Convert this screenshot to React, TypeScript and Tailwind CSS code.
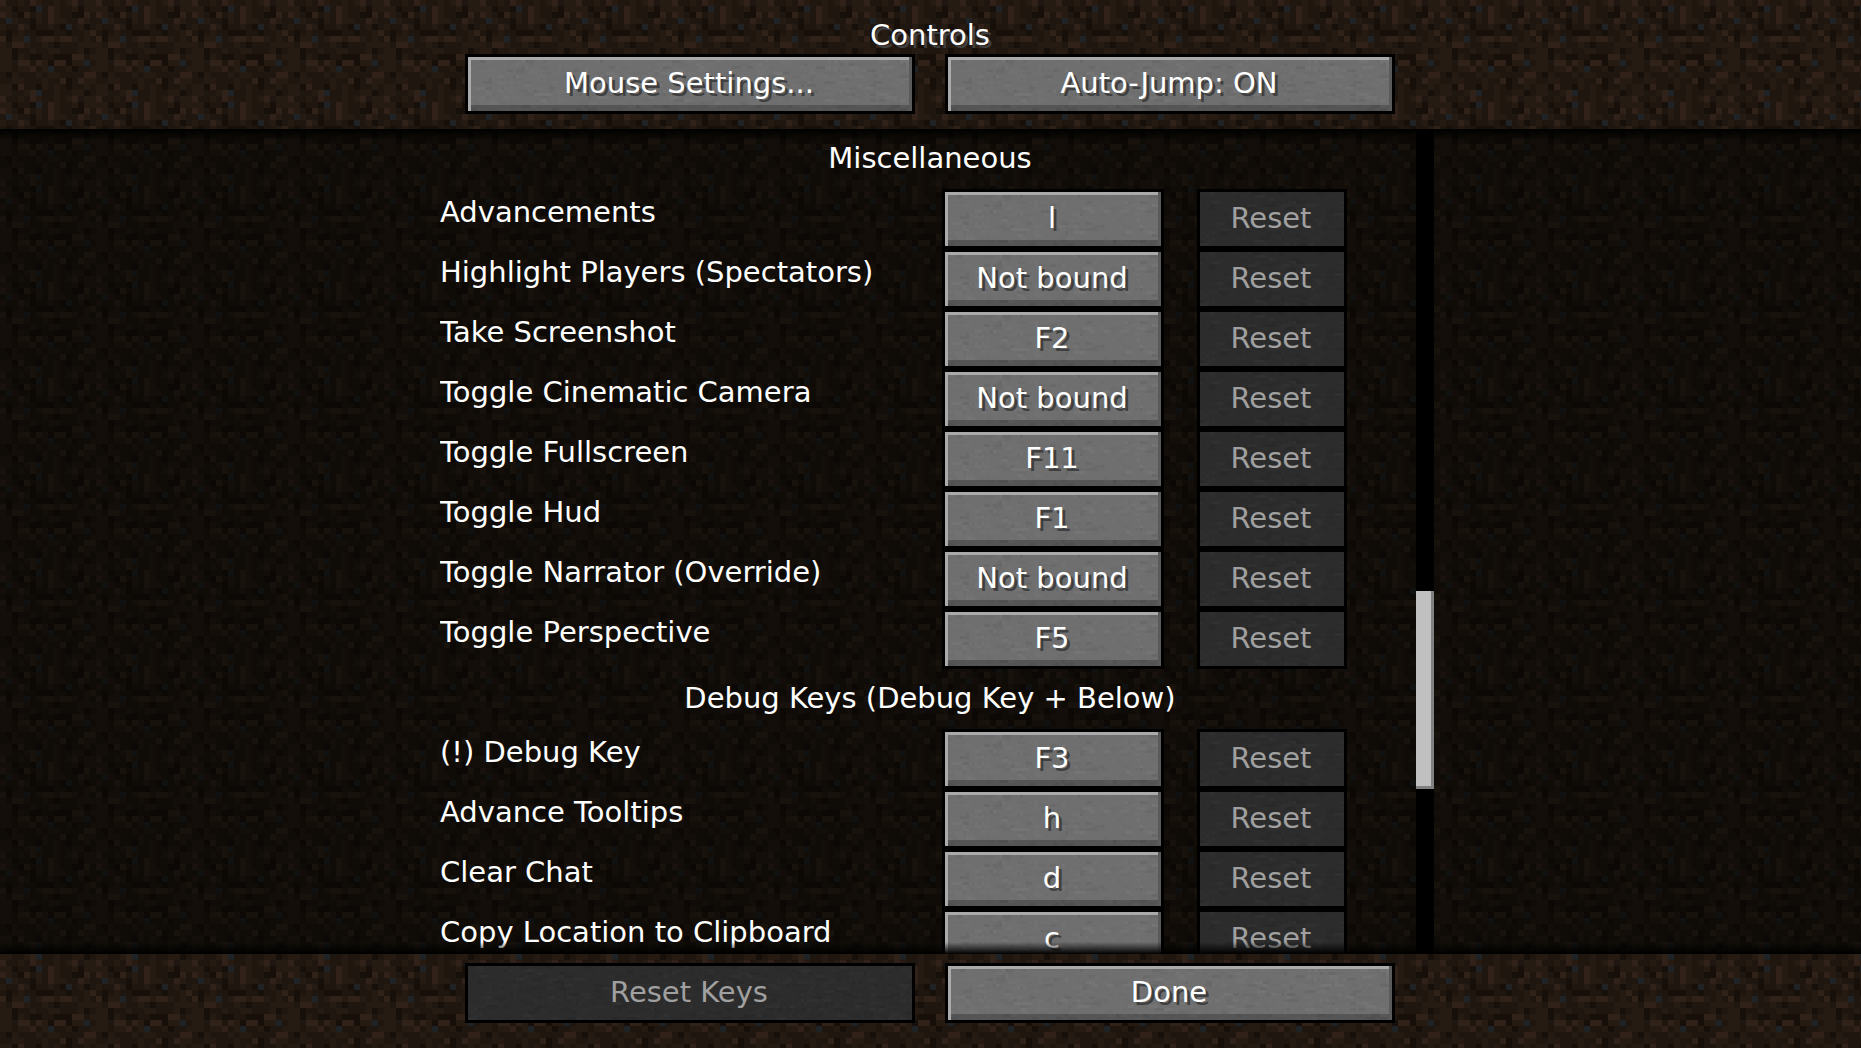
import { useState } from "react";
import clsx from "clsx";

interface Binding {
  id: string;
  label: string;
  value: string;
}

interface Category {
  title: string;
  bindings: Binding[];
}

const CATEGORIES: Category[] = [
  {
    title: "Miscellaneous",
    bindings: [
      { id: "advancements", label: "Advancements", value: "l" },
      { id: "highlight", label: "Highlight Players (Spectators)", value: "Not bound" },
      { id: "screenshot", label: "Take Screenshot", value: "F2" },
      { id: "cinematic", label: "Toggle Cinematic Camera", value: "Not bound" },
      { id: "fullscreen", label: "Toggle Fullscreen", value: "F11" },
      { id: "hud", label: "Toggle Hud", value: "F1" },
      { id: "narrator", label: "Toggle Narrator (Override)", value: "Not bound" },
      { id: "perspective", label: "Toggle Perspective", value: "F5" },
    ],
  },
  {
    title: "Debug Keys (Debug Key + Below)",
    bindings: [
      { id: "debug", label: "(!) Debug Key", value: "F3" },
      { id: "tooltips", label: "Advance Tooltips", value: "h" },
      { id: "clear-chat", label: "Clear Chat", value: "d" },
      { id: "copy-location", label: "Copy Location to Clipboard", value: "c" },
    ],
  },
];

// 16x16 dirt tile, one character per texel
const DIRT = [
  "3112132112123122",
  "220110b132112022",
  "3210312132110031",
  "1b21102132211321",
  "21132011210b1201",
  "1012110001101123",
  "3022b12332332121",
  "2133211210111222",
  "2201121122111201",
  "2202100110003312",
  "22133132033022b1",
  "22122312b1120112",
  "1021112122111133",
  "1122111211301322",
  "2203110212101121",
  "221123b112112201",
];

const DIRT_COLORS: Record<string, string> = {
  "0": "#170f0a",
  "1": "#1f160f",
  "2": "#261b12",
  "3": "#302219",
  b: "#202325",
};

function svgUrl(width: number, height: number, body: string) {
  const svg = `<svg xmlns="http://www.w3.org/2000/svg" width="${width}" height="${height}" shape-rendering="crispEdges">${body}</svg>`;
  return `url("data:image/svg+xml,${encodeURIComponent(svg)}")`;
}

function dirtTexture() {
  let body = "";
  DIRT.forEach((row, y) => {
    [...row].forEach((c, x) => {
      body += `<rect x="${x * 6}" y="${y * 6}" width="6" height="6" fill="${DIRT_COLORS[c]}"/>`;
    });
  });
  return svgUrl(96, 96, body);
}

function stoneTexture(base: string, shades: string[]) {
  let seed = 7;
  const rand = () => {
    seed = (seed * 16807) % 2147483647;
    return seed / 2147483647;
  };
  let body = `<rect width="450" height="54" fill="${base}"/>`;
  for (let i = 0; i < 750; i++) {
    const x = Math.floor(rand() * 150) * 3;
    const y = Math.floor(rand() * 18) * 3;
    const w = (1 + Math.floor(rand() * 3)) * 3;
    const fill = shades[Math.floor(rand() * shades.length)];
    body += `<rect x="${x}" y="${y}" width="${w}" height="3" fill="${fill}"/>`;
  }
  return svgUrl(450, 54, body);
}

const dirt = dirtTexture();
const stone = stoneTexture("#6f6f6f", ["#6c6c6c", "#727272", "#6d6d6d", "#717171", "#747474", "#696969", "#6e6e6e", "#707070"]);
const darkStone = stoneTexture("#2c2c2c", ["#2a2a2a", "#2e2e2e", "#2b2b2b", "#2d2d2d", "#303030", "#292929"]);

interface StoneButtonProps {
  children: React.ReactNode;
  className?: string;
  disabled?: boolean;
  label?: string;
  onClick?: () => void;
}

function StoneButton({ children, className, disabled, label, onClick }: StoneButtonProps) {
  return (
    <button
      type="button"
      disabled={disabled}
      aria-label={label}
      onClick={onClick}
      className={clsx(
        "h-[60px] shrink-0 border-[3px] border-black pr-0.5 pb-0.5 text-center",
        disabled
          ? "text-[#a0a0a0]"
          : "text-white shadow-[inset_-3px_0_0_#5a5a5a,inset_3px_3px_0_#aaaaaa,inset_0_-6px_0_rgba(0,0,0,0.23)] [text-shadow:3px_3px_0_#3f3f3f]",
        className,
      )}
      style={{ backgroundImage: disabled ? darkStone : stone }}
    >
      {children}
    </button>
  );
}

function BindingRow({ binding }: { binding: Binding }) {
  return (
    <li className="flex h-[60px] items-center pr-[73px]">
      <span className="flex-1 pb-3.5">{binding.label}</span>
      <StoneButton className="w-[222px]" label={`${binding.label}: ${binding.value}`}>
        {binding.value}
      </StoneButton>
      <StoneButton className="ml-[33px] w-[150px]" label={`Reset ${binding.label}`} disabled>
        Reset
      </StoneButton>
    </li>
  );
}

export default function App() {
  const [autoJump, setAutoJump] = useState(true);

  return (
    <div
      className="flex h-screen flex-col overflow-hidden bg-[#20160f] font-['DejaVu_Sans',sans-serif] text-[29px] leading-[34px] text-white"
      style={{ backgroundImage: dirt }}
    >
      {/* Header */}
      <header className="shrink-0 pt-[18px] pr-px pb-[15px]">
        <h1 className="text-center [text-shadow:3px_3px_0_#3f3f3f]">Controls</h1>
        <div className="mt-0.5 flex justify-center gap-[30px]">
          <StoneButton className="w-[450px]">Mouse Settings...</StoneButton>
          <StoneButton className="w-[450px]" onClick={() => setAutoJump(!autoJump)}>
            Auto-Jump: {autoJump ? "ON" : "OFF"}
          </StoneButton>
        </div>
      </header>

      {/* Key list */}
      <main
        className="relative min-h-0 flex-1 overflow-hidden bg-[position:0_-45px]"
        style={{ backgroundImage: `linear-gradient(rgba(0,2,0,0.5), rgba(0,2,0,0.5)), ${dirt}` }}
      >
        <div className="grid h-full grid-cols-[1fr_980px_1fr] pr-px">
          <div className="col-start-2 min-h-0 overflow-y-auto [scrollbar-width:none]">
            {CATEGORIES.map((category) => (
              <section key={category.title}>
                <h2 className="flex h-[60px] items-center justify-center pb-0.5">{category.title}</h2>
                <ul>
                  {category.bindings.map((binding) => (
                    <BindingRow key={binding.id} binding={binding} />
                  ))}
                </ul>
              </section>
            ))}
          </div>
          {/* Scrollbar */}
          <div className="-ml-1 w-[18px] bg-black">
            <div className="h-[56%]" />
            <div className="h-[24%] border-r-[3px] border-b-[3px] border-[#808080] bg-[#c0c0c0]" />
          </div>
        </div>
        <div className="pointer-events-none absolute inset-x-0 top-0 h-3 bg-linear-to-b from-black to-transparent" />
        <div className="pointer-events-none absolute inset-x-0 bottom-0 h-3 bg-linear-to-t from-black to-transparent" />
      </main>

      {/* Footer */}
      <footer className="flex shrink-0 justify-center gap-[30px] pt-[9px] pr-px pb-[25px]">
        <StoneButton className="w-[450px]" disabled>
          Reset Keys
        </StoneButton>
        <StoneButton className="w-[450px]">Done</StoneButton>
      </footer>
    </div>
  );
}
